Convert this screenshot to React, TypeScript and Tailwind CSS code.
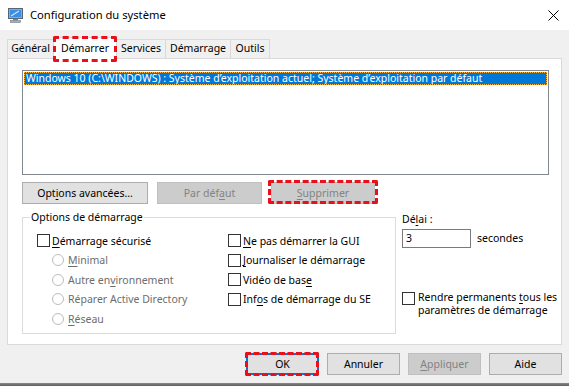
import React from "react";

const font = "font-['Segoe_UI','Noto_Sans',sans-serif]";

function U({ children }: { children: React.ReactNode }) {
  return <span className="underline underline-offset-[2px] decoration-[1px]">{children}</span>;
}

function Check({ children }: { children: React.ReactNode }) {
  return (
    <div className="flex items-center h-[19.5px] whitespace-nowrap">
      <span className="w-[13px] h-[13px] border border-[#333333] bg-white shrink-0" />
      <span className="ml-[2px] leading-none">{children}</span>
    </div>
  );
}

function Radio({ children }: { children: React.ReactNode }) {
  return (
    <div className="flex items-center h-[19.5px] pl-[15px] text-[#6d6d6d] whitespace-nowrap">
      <span className="w-[12px] h-[12px] rounded-full border border-[#bcbcbc] bg-white shrink-0" />
      <span className="ml-[4px] leading-none">{children}</span>
    </div>
  );
}

function Btn({ children, w, disabled, focus }: { children: React.ReactNode; w: string; disabled?: boolean; focus?: boolean }) {
  const base = "h-[22px] flex items-center justify-center leading-none whitespace-nowrap";
  const look = disabled
    ? "bg-[#cccccc] border border-[#bfbfbf] text-[#838383]"
    : focus
      ? "bg-[#e1e1e1] border-2 border-[#0078d7] text-black"
      : "bg-[#e1e1e1] border border-[#adadad] text-black";
  return <div className={`${base} ${look} ${w}`}>{children}</div>;
}

function Tab({ children, w }: { children: React.ReactNode; w: string }) {
  return (
    <div className={`h-[19px] ${w} border border-[#d9d9d9] border-b-0 -ml-[1px] first:ml-0 flex items-center justify-center bg-[#f0f0f0] whitespace-nowrap`}>
      {children}
    </div>
  );
}

function MonitorIcon() {
  return (
    <svg width="15" height="15" viewBox="0 0 15 15">
      <rect x="0.5" y="0.5" width="14" height="10" fill="#9aa7b4" stroke="#5a6570" />
      <rect x="2" y="2" width="11" height="7" fill="#3a8ee6" />
      <path d="M3 8 L11 3" stroke="#cfe6ff" strokeWidth="1.2" />
      <rect x="5" y="11" width="5" height="1.5" fill="#7d8893" />
      <rect x="2.5" y="12.5" width="10" height="2" fill="#a9b3bd" stroke="#6f7a85" strokeWidth="0.6" />
    </svg>
  );
}

export default function App() {
  return (
    <div className={`w-[569px] h-[386px] bg-[#f0f0f0] flex flex-col overflow-hidden text-[10.5px] text-black ${font}`}>
      {/* Title bar */}
      <div className="h-[30px] bg-white flex items-center pl-[8px] pr-[10px] shrink-0">
        <MonitorIcon />
        <span className="ml-[7px] text-[11.2px] leading-none">Configuration du système</span>
        <svg className="ml-auto" width="11" height="11" viewBox="0 0 11 11">
          <path d="M0.5 0.5 L10.5 10.5 M10.5 0.5 L0.5 10.5" stroke="#000" strokeWidth="1" />
        </svg>
      </div>

      {/* Tabs */}
      <div className="px-[7px] pt-[9px] shrink-0">
        <div className="flex items-end h-[19px]">
          <Tab w="w-[47px]">Général</Tab>
          <div className="relative z-10 h-[22px] w-[64px] -ml-[1px] -mb-[1px] bg-white border border-[#d9d9d9] border-b-0 flex items-center justify-center">
            Démarrer
            <div className="absolute -left-[1px] -top-[2px] w-[64px] h-[26px] border-[3px] border-dashed border-[#e8101a] rounded-[2px]" />
          </div>
          <Tab w="w-[50px]">Services</Tab>
          <Tab w="w-[66px]">Démarrage</Tab>
          <Tab w="w-[40px]">Outils</Tab>
        </div>
      </div>

      {/* Panel */}
      <div className="mx-[7px] h-[287px] bg-white border border-[#d9d9d9] shrink-0 px-[14px] pt-[11px]">
        {/* OS list */}
        <div className="w-[527px] h-[105px] border border-[#828790] bg-white p-[1px]">
          <div className="h-[13px] bg-[#0078d7] text-white border border-dotted border-[#ffb23f] flex items-center pl-[1px] leading-none whitespace-nowrap overflow-hidden">
            Windows 10 (C:\WINDOWS) : Système d’exploitation actuel; Système d’exploitation par défaut
          </div>
        </div>

        {/* Buttons */}
        <div className="flex mt-[7px] h-[22px] items-center">
          <Btn w="w-[126px]">Opt<U>i</U>ons avancées…</Btn>
          <div className="ml-[9px]"><Btn w="w-[105px]" disabled>Par déf<U>a</U>ut</Btn></div>
          <div className="ml-[9px] relative">
            <Btn w="w-[104px]" disabled><U>S</U>upprimer</Btn>
            <div className="absolute -left-[3px] -top-[2px] w-[110px] h-[24px] border-[3px] border-dashed border-[#e8101a] rounded-[2px]" />
          </div>
        </div>

        <div className="flex mt-[5px]">
          {/* Boot options */}
          <fieldset className="w-[374px] h-[125px] shrink-0 border border-[#dcdcdc] pl-[14px] pr-0 pt-[6px] m-0">
            <legend className="-ml-[7px] px-[1px] leading-[16px]">Options de démarrage</legend>
            <div className="flex">
              <div className="w-[191px]">
                <Check><U>D</U>émarrage sécurisé</Check>
                <Radio><U>M</U>inimal</Radio>
                <Radio>Autre en<U>v</U>ironnement</Radio>
                <Radio>Réparer Active Directory</Radio>
                <Radio><U>R</U>éseau</Radio>
              </div>
              <div>
                <Check><U>N</U>e pas démarrer la GUI</Check>
                <Check><U>J</U>ournaliser le démarrage</Check>
                <Check>Vidéo de bas<U>e</U></Check>
                <Check>Inf<U>o</U>s de démarrage du SE</Check>
              </div>
            </div>
          </fieldset>

          {/* Timeout */}
          <div className="ml-[6px] mt-[3px] flex flex-col shrink-0">
            <div className="h-[16px] flex items-center">Dé<U>l</U>ai :</div>
            <div className="flex items-center mt-[1px]">
              <div className="w-[69px] h-[19px] border border-[#7a7a7a] bg-white flex items-center pl-[3px] leading-none">3</div>
              <span className="ml-[6px]">secondes</span>
            </div>
            <div className="flex mt-[44px]">
              <span className="w-[13px] h-[13px] border border-[#333333] bg-white shrink-0" />
              <span className="ml-[3px] leading-[13px] -mt-[1px] whitespace-nowrap">
                Rendre permanents <U>t</U>ous les<br />paramètres de démarrage
              </span>
            </div>
          </div>
        </div>
      </div>

      {/* Dialog buttons */}
      <div className="flex justify-end gap-[8px] pr-[7px] mt-[8px] shrink-0">
        <div className="relative">
          <Btn w="w-[73px]" focus>OK</Btn>
          <div className="absolute -left-[1px] -top-[1px] w-[74px] h-[24px] border-[3px] border-dashed border-[#e8101a] rounded-[2px]" />
        </div>
        <Btn w="w-[73px]">Annuler</Btn>
        <Btn w="w-[73px]" disabled><U>A</U>ppliquer</Btn>
        <Btn w="w-[73px]">Aide</Btn>
      </div>

      <div className="flex-1" />
      <div className="h-[3px] bg-gradient-to-b from-[#8a8a8a] to-[#5e5e5e] shrink-0" />
    </div>
  );
}
